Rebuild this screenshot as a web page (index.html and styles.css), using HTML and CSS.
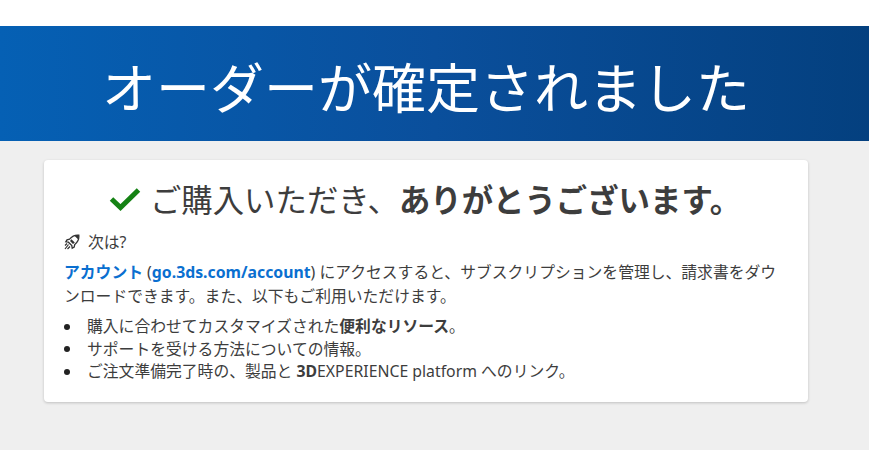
FILE: index.html
```html
<!DOCTYPE html>
<html lang="ja">
<head>
<meta charset="utf-8">
<title>オーダーが確定されました</title>
<link rel="stylesheet" href="styles.css">
</head>
<body>
<div class="topbar"></div>
<header class="hero"><h1>オーダーが確定されました</h1></header>
<main class="card">
  <h2 class="thanks">
    <svg class="check" viewBox="0 0 32 24" aria-hidden="true"><path d="M2.5 12 L11.5 20.5 L29.5 3" /></svg>
    <span>ご購入いただき、<b>ありがとうございます。</b></span>
  </h2>
  <p class="next">
    <svg class="rocket" viewBox="0 0 16 16" aria-hidden="true">
      <path class="rocket-body" d="M14.8 1.2 C11 0.8 8 2.2 5.6 5.2 L3 5.8 L1.8 7.8 L4.4 8.2 L7.8 11.6 L8.2 14.2 L10.2 13 L10.8 10.4 C13.8 8 15.2 5 14.8 1.2 Z"/>
      <path class="rocket-stripe" d="M14.8 1.2 C13 1 11.6 1.2 10.4 1.7 L14.3 5.6 C14.8 4.3 15 2.9 14.8 1.2 Z M6 7 L9 10 L10.8 8.6 L7.4 5.2 Z"/>
      <path class="rocket-flame" d="M4.5 10.5 L1 15 M6 12.5 L3.5 15 M3 9.5 L1 11.5"/>
    </svg>
    <span>次は?</span>
  </p>
  <p class="intro"><a href="#">アカウント</a> (<a href="#">go.3ds.com/account</a>) にアクセスすると、サブスクリプションを管理し、請求書をダウンロードできます。また、以下もご利用いただけます。</p>
  <ul class="list">
    <li>購入に合わせてカスタマイズされた<b>便利なリソース</b>。</li>
    <li>サポートを受ける方法についての情報。</li>
    <li>ご注文準備完了時の、製品と <b>3D</b>EXPERIENCE platform へのリンク。</li>
  </ul>
</main>
</body>
</html>
```
FILE: styles.css
```css
* { box-sizing: border-box; }
html, body { margin: 0; height: 100%; }
body {
  background: #efefef;
  color: #3d3d3d;
  font-family: "Noto Sans", "Noto Sans CJK JP", sans-serif;
  font-size: 15.8px;
  overflow: hidden;
}
.topbar { height: 26px; background: #fff; }
.hero {
  height: 115px;
  padding: 6px 17px 0 0;
  background: linear-gradient(90deg, #0560b4 0%, #0a4f9c 50%, #04407f 100%);
  display: flex;
  align-items: center;
  justify-content: center;
}
.hero h1 {
  margin: 0;
  color: #fff;
  font-size: 54px;
  font-weight: 400;
  line-height: 1.2;
  font-family: "Noto Sans CJK JP", sans-serif;
}
.card {
  width: 764px;
  height: 242px;
  margin: 19px 0 0 44px;
  padding: 17px 20px 0;
  background: #fff;
  border-radius: 4px;
  box-shadow: 0 1px 3px rgba(0,0,0,.2);
}
.thanks {
  margin: 0 0 9px 0;
  padding-right: 2px;
  display: flex;
  align-items: center;
  justify-content: center;
  gap: 9px;
  font-size: 31.4px;
  font-weight: 400;
  line-height: 44px;
  font-family: "Noto Sans CJK JP", sans-serif;
}
.thanks b { font-weight: 700; }
.check { width: 32px; height: 24px; flex: none; }
.check path { fill: none; stroke: #158214; stroke-width: 5; }
.next {
  margin: 0 0 6px;
  display: flex;
  align-items: center;
  gap: 8px;
  line-height: 24px;
  font-size: 15.8px;
}
.rocket { width: 16px; height: 16px; flex: none; }
.rocket-body { fill: #fff; stroke: #333; stroke-width: 1.3; }
.rocket-stripe { fill: #333; }
.rocket-flame { stroke: #333; stroke-width: 1.2; fill: none; }
.intro { margin: 0 0 7px; line-height: 24px; }
.intro a { color: #0a6fd0; font-weight: 700; text-decoration: none; }
.list { margin: 0; padding: 0 0 0 23px; list-style: none; }
.list li { height: 22.5px; line-height: 23px; }
.list li::before {
  content: "";
  display: inline-block;
  width: 6px;
  height: 6px;
  margin: 0 17px 2px -23px;
  border-radius: 50%;
  background: #222;
  vertical-align: middle;
}
```
